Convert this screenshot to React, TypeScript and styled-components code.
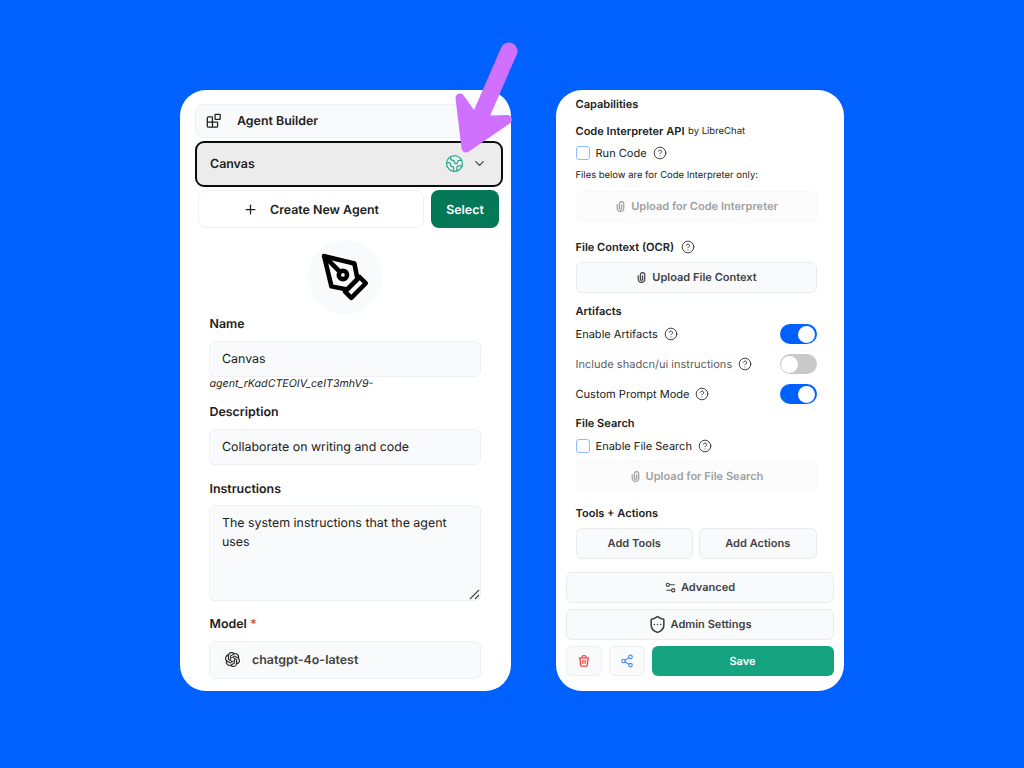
import React from "react";
import styled, { createGlobalStyle } from "styled-components";
import {
  Blocks,
  ChevronDown,
  CircleQuestionMark,
  Earth,
  Plus,
  Settings2,
  Share2,
  ShieldEllipsis,
} from "lucide-react";
import { SiOpenai } from "react-icons/si";

const GlobalStyle = createGlobalStyle`
  * { box-sizing: border-box; }
  body {
    margin: 0;
    background: #0061ff;
    color: #212121;
    font-family: Inter, "Liberation Sans", sans-serif;
    text-rendering: geometricPrecision;
  }
  button, input, textarea {
    margin: 0;
    color: #212121;
    font-family: inherit;
    text-rendering: inherit;
  }
`;

const Stage = styled.main`
  position: relative;
  display: flex;
  align-items: flex-start;
  gap: 44.5px;
  width: 1024px;
  height: 768px;
  padding: 90px 0 0 180px;
  overflow: hidden;
  background: #0061ff;
`;

const Card = styled.section<{ $width: number; $pad: string }>`
  display: flex;
  flex-direction: column;
  width: ${(p) => p.$width}px;
  height: 601px;
  padding: ${(p) => p.$pad};
  border-radius: 26px;
  background: #fff;
`;

const BuilderBar = styled.header`
  display: flex;
  align-items: center;
  gap: 15.5px;
  height: 34px;
  padding: 0 0 1px 10px;
  border: 1px solid #f0f1f2;
  border-radius: 8px;
  background: #f9fafb;
  font-size: 12.4px;
  font-weight: 600;
`;

const AgentSelect = styled.button`
  display: flex;
  align-items: center;
  height: 46px;
  margin-top: 3px;
  padding: 0 14px 1px 13px;
  border: 2px solid #0d0d0d;
  border-radius: 9px;
  background: #ececec;
  font-size: 12.4px;
  font-weight: 600;
  svg:first-of-type { margin-left: auto; margin-right: 8px; }
`;

const CreateRow = styled.div`
  display: flex;
  gap: 7px;
  margin-top: 3px;
  padding: 0 4px 0 3px;
`;

const CreateButton = styled.button`
  display: flex;
  flex: 1;
  align-items: center;
  justify-content: center;
  gap: 12px;
  height: 38px;
  border: 1px solid #f1f1f2;
  border-radius: 8px;
  background: #fff;
  font-size: 12.4px;
  font-weight: 600;
`;

const SelectButton = styled.button`
  width: 68px;
  height: 38px;
  padding: 0;
  border: 0;
  border-radius: 8px;
  background: #047857;
  && { color: #fff; }
  font-size: 12.4px;
  font-weight: 600;
`;

const Avatar = styled.div`
  display: flex;
  align-items: center;
  justify-content: center;
  width: 74px;
  height: 74px;
  margin: 12px auto 0;
  border-radius: 50%;
  background: #f9fafb;
  color: #000;
`;

const Form = styled.form`
  display: flex;
  flex-direction: column;
  padding: 0 22px 0 14px;
`;

const Label = styled.label<{ $top: number; $gap: number }>`
  margin-top: ${(p) => p.$top}px;
  margin-bottom: ${(p) => p.$gap}px;
  padding-left: 0.5px;
  font-size: 12.4px;
  font-weight: 600;
  line-height: 16px;
`;

const Required = styled.span`
  color: #ef4444;
`;

const TextField = styled.input`
  width: 100%;
  height: 36px;
  padding: 0 12px 2px;
  border: 1px solid #eff0f2;
  border-radius: 6px;
  outline: 0;
  background: #f9fafb;
  font-size: 12.4px;
`;

const AgentId = styled.p`
  margin: 0;
  padding-left: 0.5px;
  font-size: 10.65px;
  font-style: italic;
  line-height: 14px;
`;

const TextAreaBox = styled.div`
  position: relative;
  display: flex;
`;

const Instructions = styled.textarea`
  width: 100%;
  height: 96px;
  padding: 7px 12px;
  border: 1px solid #eff0f2;
  border-radius: 6px;
  outline: 0;
  resize: none;
  background: #f9fafb;
  font-size: 12.4px;
  line-height: 19px;
`;

const ResizeGrip = styled.svg`
  position: absolute;
  right: 1px;
  bottom: 1px;
`;

const ModelButton = styled.button`
  display: flex;
  align-items: center;
  gap: 9px;
  height: 38px;
  padding: 0 12px 1px;
  border: 1px solid #eceef0;
  border-radius: 7px;
  background: #f9fafb;
  && { color: #424242; }
  font-size: 12.4px;
  font-weight: 600;
`;

const ModelBadge = styled.span`
  display: flex;
  align-items: center;
  justify-content: center;
  width: 21px;
  height: 21px;
  border: 1px solid #f0f0f0;
  border-radius: 50%;
  background: #fff;
  color: #212121;
`;

const Pointer = styled.svg`
  position: absolute;
  left: 450px;
  top: 38px;
`;

const Capabilities = styled.div`
  display: flex;
  flex-direction: column;
  padding: 0 17px 0 10px;
`;

const Heading = styled.h3<{ $top: number }>`
  display: flex;
  align-items: center;
  gap: 6.5px;
  height: 16px;
  margin: ${(p) => p.$top}px 0 0;
  font-size: 11.05px;
  font-weight: 600;
`;

const Provider = styled.small`
  margin-left: -3px;
  font-size: 9.5px;
  font-weight: 400;
`;

const Option = styled.div<{ $top: number; $muted?: boolean }>`
  display: flex;
  align-items: center;
  gap: 6px;
  height: 20px;
  margin-top: ${(p) => p.$top}px;
  color: ${(p) => (p.$muted ? "#5d5d5d" : "#212121")};
  font-size: 11.05px;
`;

const Checkbox = styled.span`
  width: 14px;
  height: 14px;
  border: 1px solid #8fbaff;
  border-radius: 3px;
  background: #fff;
`;

const Toggle = styled.span<{ $on?: boolean }>`
  display: flex;
  justify-content: ${(p) => (p.$on ? "flex-end" : "flex-start")};
  width: 37px;
  height: 20px;
  margin-left: auto;
  padding: 1.5px;
  border-radius: 10px;
  background: ${(p) => (p.$on ? "#0061ff" : "#c9c9c9")};
  &::after {
    content: "";
    width: 17px;
    height: 17px;
    border-radius: 50%;
    background: #fff;
  }
`;

const Note = styled.p`
  margin: 6px 0 0;
  font-size: 9.45px;
  line-height: 14px;
`;

const SoftButton = styled.button<{ $top?: number; $disabled?: boolean }>`
  display: flex;
  flex: none;
  align-items: center;
  justify-content: center;
  gap: 4px;
  height: 31px;
  margin-top: ${(p) => p.$top ?? 0}px;
  padding: 0 0 1px;
  border: 1px solid ${(p) => (p.$disabled ? "#f7f8f8" : "#e9ebed")};
  border-radius: 6px;
  background: ${(p) => (p.$disabled ? "#fcfcfd" : "#f9fafb")};
  && { color: ${(p) => (p.$disabled ? "#a0a0a0" : "#424242")}; }
  font-size: 11.05px;
  font-weight: 600;
`;

const ButtonPair = styled.div`
  display: grid;
  grid-template-columns: 1fr 1fr;
  gap: 6px;
  margin-top: 7px;
`;

const Footer = styled.footer`
  display: flex;
  gap: 6.5px;
  margin-top: 6px;
`;

const IconButton = styled.button<{ $color: string }>`
  display: flex;
  align-items: center;
  justify-content: center;
  width: 36.5px;
  height: 30px;
  padding: 0;
  border: 1px solid #eceef0;
  border-radius: 6px;
  background: #f9fafb;
  && { color: ${(p) => p.$color}; }
`;

const SaveButton = styled.button`
  flex: 1;
  height: 30px;
  border: 0;
  border-radius: 6px;
  background: #16a37f;
  && { color: #fff; }
  font-size: 11.05px;
  font-weight: 600;
`;

const Help = () => <CircleQuestionMark size={14} strokeWidth={1.7} color="#424242" />;

const PenIcon = () => (
  <svg
    width="50"
    height="50"
    viewBox="0 0 24 24"
    fill="none"
    stroke="currentColor"
    strokeWidth="2.2"
    strokeLinecap="round"
    strokeLinejoin="round"
  >
    <path d="m12 19 7-7 3 3-7 7-3-3z" />
    <path d="m18 13-1.500-7.500L2 2l3.500 14.500L13 18l5-5z" />
    <path d="m2 2 7.586 7.586" />
    <circle cx="11" cy="11" r="2" />
  </svg>
);

const ClipIcon = () => (
  <svg width="13" height="13" viewBox="0 0 24 24" fill="currentColor" stroke="currentColor" strokeWidth="0.3">
    <path
      fillRule="evenodd"
      clipRule="evenodd"
      d="M9 7C9 4.23858 11.2386 2 14 2C16.7614 2 19 4.23858 19 7V15C19 18.866 15.866 22 12 22C8.13401 22 5 18.866 5 15V9C5 8.44772 5.44772 8 6 8C6.55228 8 7 8.44772 7 9V15C7 17.7614 9.23858 20 12 20C14.7614 20 17 17.7614 17 15V7C17 5.34315 15.6569 4 14 4C12.3431 4 11 5.34315 11 7V15C11 15.5523 11.4477 16 12 16C12.5523 16 13 15.5523 13 15V9C13 8.44772 13.4477 8 14 8C14.5523 8 15 8.44772 15 9V15C15 16.6569 13.6569 18 12 18C10.3431 18 9 16.6569 9 15V7Z"
    />
  </svg>
);

const TrashIcon = () => (
  <svg width="14" height="14" viewBox="0 0 24 24" fill="currentColor" stroke="currentColor" strokeWidth="0.3">
    <path
      fillRule="evenodd"
      clipRule="evenodd"
      d="M10.5555 4C10.099 4 9.70052 4.30906 9.58693 4.75114L9.29382 5.8919H14.715L14.4219 4.75114C14.3083 4.30906 13.9098 4 13.4533 4H10.5555ZM16.7799 5.8919L16.3589 4.25342C16.0182 2.92719 14.8226 2 13.4533 2H10.5555C9.18616 2 7.99062 2.92719 7.64985 4.25342L7.22886 5.8919H4C3.44772 5.8919 3 6.33961 3 6.8919C3 7.44418 3.44772 7.8919 4 7.8919H4.10069L5.31544 19.3172C5.47763 20.8427 6.76455 22 8.29863 22H15.7014C17.2354 22 18.5224 20.8427 18.6846 19.3172L19.8993 7.8919H20C20.5523 7.8919 21 7.44418 21 6.8919C21 6.33961 20.5523 5.8919 20 5.8919H16.7799ZM17.888 7.8919H6.11196L7.30423 19.1057C7.3583 19.6142 7.78727 20 8.29863 20H15.7014C16.2127 20 16.6417 19.6142 16.6958 19.1057L17.888 7.8919ZM10 10C10.5523 10 11 10.4477 11 11V16C11 16.5523 10.5523 17 10 17C9.44772 17 9 16.5523 9 16V11C9 10.4477 9.44772 10 10 10ZM14 10C14.5523 10 15 10.4477 15 11V16C15 16.5523 14.5523 17 14 17C13.4477 17 13 16.5523 13 16V11C13 10.4477 13.4477 10 14 10Z"
    />
  </svg>
);

export default function App() {
  return (
    <>
      <GlobalStyle />
      <Stage>
        <Card $width={331} $pad="14px 8px 0 15px">
          <BuilderBar>
            <Blocks size={15.5} strokeWidth={2} />
            Agent Builder
          </BuilderBar>
          <AgentSelect>
            Canvas
            <Earth size={19} strokeWidth={1.6} color="#2fa98c" />
            <ChevronDown size={15} strokeWidth={2} color="#424242" />
          </AgentSelect>
          <CreateRow>
            <CreateButton>
              <Plus size={15} strokeWidth={2} />
              Create New Agent
            </CreateButton>
            <SelectButton>Select</SelectButton>
          </CreateRow>
          <Form>
            <Avatar>
              <PenIcon />
            </Avatar>
            <Label $top={2} $gap={9}>Name</Label>
            <TextField defaultValue="Canvas" />
            <AgentId>agent_rKadCTEOIV_ceIT3mhV9-</AgentId>
            <Label $top={13} $gap={9}>Description</Label>
            <TextField defaultValue="Collaborate on writing and code" />
            <Label $top={16} $gap={8}>Instructions</Label>
            <TextAreaBox>
              <Instructions defaultValue="The system instructions that the agent uses" />
              <ResizeGrip width="11" height="11" viewBox="0 0 11 11" stroke="#424242" strokeWidth="1.1">
                <path d="M1 10L10 1M6 10L10 6" />
              </ResizeGrip>
            </TextAreaBox>
            <Label $top={15} $gap={9}>
              Model <Required>*</Required>
            </Label>
            <ModelButton type="button">
              <ModelBadge>
                <SiOpenai size={15} stroke="currentColor" strokeWidth={0.4} />
              </ModelBadge>
              chatgpt-4o-latest
            </ModelButton>
          </Form>
        </Card>

        <Card $width={288.5} $pad="6px 10.5px 0 10px">
          <Capabilities>
            <Heading $top={0}>Capabilities</Heading>
            <Heading $top={11}>
              Code Interpreter API <Provider>by LibreChat</Provider>
            </Heading>
            <Option $top={4}>
              <Checkbox />
              Run Code
              <Help />
            </Option>
            <Note>Files below are for Code Interpreter only:</Note>
            <SoftButton $top={8} $disabled>
              <ClipIcon />
              Upload for Code Interpreter
            </SoftButton>
            <Heading $top={17}>
              File Context (OCR) <Help />
            </Heading>
            <SoftButton $top={7}>
              <ClipIcon />
              Upload File Context
            </SoftButton>
            <Heading $top={10}>Artifacts</Heading>
            <Option $top={5}>
              Enable Artifacts <Help />
              <Toggle $on />
            </Option>
            <Option $top={10} $muted>
              Include shadcn/ui instructions <Help />
              <Toggle />
            </Option>
            <Option $top={10}>
              Custom Prompt Mode <Help />
              <Toggle $on />
            </Option>
            <Heading $top={11}>File Search</Heading>
            <Option $top={5}>
              <Checkbox />
              Enable File Search
              <Help />
            </Option>
            <SoftButton $top={5} $disabled>
              <ClipIcon />
              Upload for File Search
            </SoftButton>
            <Heading $top={13}>Tools + Actions</Heading>
            <ButtonPair>
              <SoftButton>Add Tools</SoftButton>
              <SoftButton>Add Actions</SoftButton>
            </ButtonPair>
          </Capabilities>
          <SoftButton $top={13}>
            <Settings2 size={13} strokeWidth={2} />
            Advanced
          </SoftButton>
          <SoftButton $top={6}>
            <ShieldEllipsis size={19} strokeWidth={2} />
            Admin Settings
          </SoftButton>
          <Footer>
            <IconButton $color="#ef4444" aria-label="Delete">
              <TrashIcon />
            </IconButton>
            <IconButton $color="#4a90f7" aria-label="Share">
              <Share2 size={14} strokeWidth={2} />
            </IconButton>
            <SaveButton>Save</SaveButton>
          </Footer>
        </Card>

        <Pointer width="70" height="120" viewBox="450 38 70 120">
          <path d="M509 51L479 120" stroke="#d070ff" strokeWidth="17" strokeLinecap="round" />
          <path
            d="M460 98L473.500 117L490 120L507.500 119.500L466 148Z"
            fill="#d070ff"
            stroke="#d070ff"
            strokeWidth="9"
            strokeLinejoin="round"
          />
        </Pointer>
      </Stage>
    </>
  );
}
